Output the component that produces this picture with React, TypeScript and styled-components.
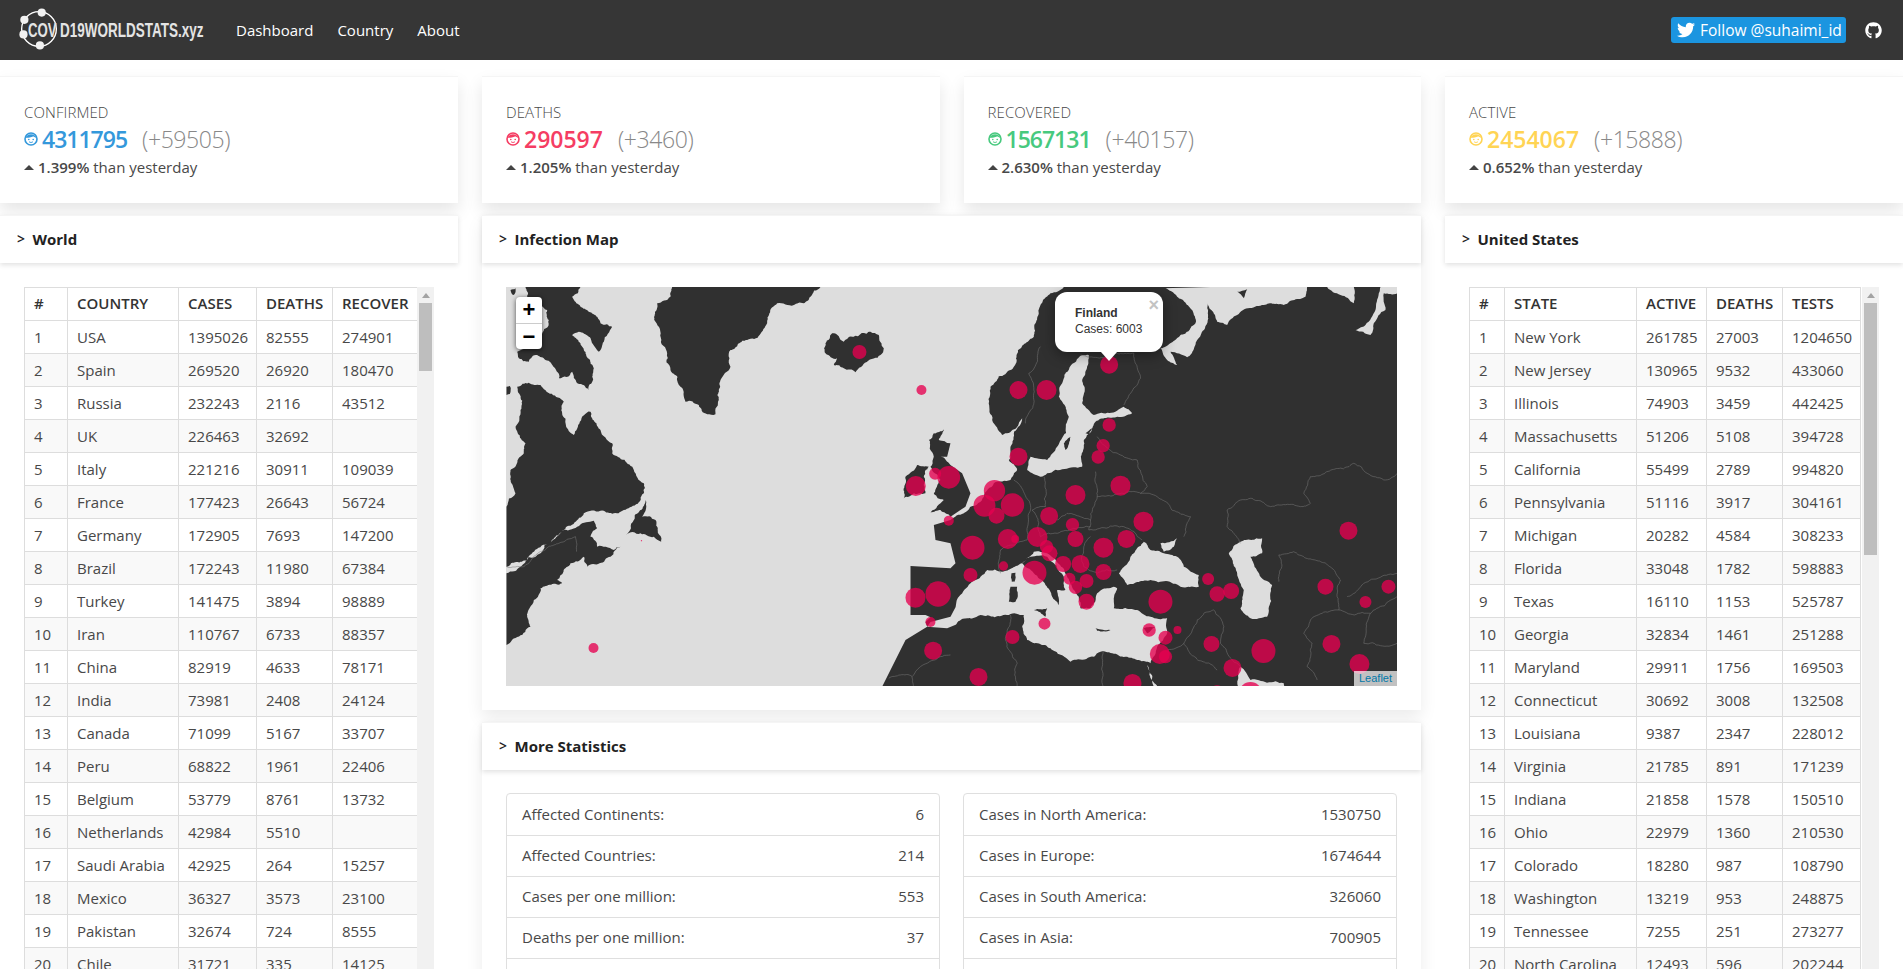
import styled, { createGlobalStyle } from "styled-components";
import { FaTwitter, FaGithub } from "react-icons/fa";

const GlobalStyle = createGlobalStyle`
  html, body {
    margin: 0;
    height: 969px;
    overflow: hidden;
    background: #fff;
    font-family: "Open Sans", "Noto Sans", sans-serif;
    font-size: 15px;
    color: #484848;
  }
  * { box-sizing: border-box; }
`;

const world = [
  ["USA", "1395026", "82555", "274901"],
  ["Spain", "269520", "26920", "180470"],
  ["Russia", "232243", "2116", "43512"],
  ["UK", "226463", "32692", ""],
  ["Italy", "221216", "30911", "109039"],
  ["France", "177423", "26643", "56724"],
  ["Germany", "172905", "7693", "147200"],
  ["Brazil", "172243", "11980", "67384"],
  ["Turkey", "141475", "3894", "98889"],
  ["Iran", "110767", "6733", "88357"],
  ["China", "82919", "4633", "78171"],
  ["India", "73981", "2408", "24124"],
  ["Canada", "71099", "5167", "33707"],
  ["Peru", "68822", "1961", "22406"],
  ["Belgium", "53779", "8761", "13732"],
  ["Netherlands", "42984", "5510", ""],
  ["Saudi Arabia", "42925", "264", "15257"],
  ["Mexico", "36327", "3573", "23100"],
  ["Pakistan", "32674", "724", "8555"],
  ["Chile", "31721", "335", "14125"],
];

const states = [
  ["New York", "261785", "27003", "1204650"],
  ["New Jersey", "130965", "9532", "433060"],
  ["Illinois", "74903", "3459", "442425"],
  ["Massachusetts", "51206", "5108", "394728"],
  ["California", "55499", "2789", "994820"],
  ["Pennsylvania", "51116", "3917", "304161"],
  ["Michigan", "20282", "4584", "308233"],
  ["Florida", "33048", "1782", "598883"],
  ["Texas", "16110", "1153", "525787"],
  ["Georgia", "32834", "1461", "251288"],
  ["Maryland", "29911", "1756", "169503"],
  ["Connecticut", "30692", "3008", "132508"],
  ["Louisiana", "9387", "2347", "228012"],
  ["Virginia", "21785", "891", "171239"],
  ["Indiana", "21858", "1578", "150510"],
  ["Ohio", "22979", "1360", "210530"],
  ["Colorado", "18280", "987", "108790"],
  ["Washington", "13219", "953", "248875"],
  ["Tennessee", "7255", "251", "273277"],
  ["North Carolina", "12493", "596", "202244"],
];

const cards = [
  { label: "CONFIRMED", total: "4311795", plus: "(+59505)", rate: "1.399%", color: "#3498db", tight: true },
  { label: "DEATHS", total: "290597", plus: "(+3460)", rate: "1.205%", color: "#f53d63", tight: false },
  { label: "RECOVERED", total: "1567131", plus: "(+40157)", rate: "2.630%", color: "#47c97e", tight: true },
  { label: "ACTIVE", total: "2454067", plus: "(+15888)", rate: "0.652%", color: "#ffd454", tight: false },
];

const leftStats = [
  ["Affected Continents:", "6"],
  ["Affected Countries:", "214"],
  ["Cases per one million:", "553"],
  ["Deaths per one million:", "37"],
  ["", ""],
];

const rightStats = [
  ["Cases in North America:", "1530750"],
  ["Cases in Europe:", "1674644"],
  ["Cases in South America:", "326060"],
  ["Cases in Asia:", "700905"],
  ["", ""],
];

// bubbles read off the reference, in 3x crop coordinates
const westBubbles = [
  [1077, 216, 21], [1263, 330, 15], [1246, 618, 30], [1304, 581, 18], [1345, 592, 34],
  [1345, 722, 15], [1245, 953, 30], [1313, 942, 38], [1290, 1026, 15], [1298, 1112, 27],
  [279, 1104, 15], [423, 782, 2],
];

const eastBubbles = [
  [204, 330, 27], [288, 330, 30], [476, 254, 27], [476, 435, 20], [458, 497, 20], [443, 531, 20],
  [204, 530, 27], [510, 617, 30], [375, 645, 30], [132, 632, 32], [102, 677, 33], [186, 675, 35],
  [138, 707, 24], [296, 708, 27], [366, 734, 20], [579, 725, 30], [261, 771, 30], [375, 777, 24],
  [459, 803, 30], [528, 777, 27], [172, 777, 30], [194, 777, 12], [66, 803, 36], [288, 800, 20],
  [297, 820, 24], [338, 852, 24], [390, 852, 27], [159, 858, 14], [60, 885, 21], [252, 878, 36],
  [459, 876, 24], [357, 896, 18], [408, 903, 21], [375, 922, 20], [408, 965, 24], [630, 965, 36],
  [773, 897, 18], [800, 942, 23], [842, 933, 24], [1125, 920, 24], [1245, 966, 18], [1314, 920, 21],
  [1194, 752, 27], [282, 1031, 18], [186, 1071, 21], [596, 1050, 20], [645, 1073, 21], [681, 1050, 12],
  [783, 1092, 24], [939, 1113, 36], [1143, 1092, 27], [628, 1122, 30], [645, 1130, 20], [846, 1164, 27],
  [1227, 1152, 30], [84, 1191, 27], [546, 1209, 27], [800, 1240, 24], [900, 1240, 34],
];

const westLand = [
  "75,21 240,21 215,50 260,90 300,130 335,140 310,185 295,215 265,170 235,155 215,165 250,210 280,265 265,330 215,275 175,295 135,240 110,225 85,245 55,235 50,215 100,190 145,120 140,90 120,70 80,50",
  "18,320 28,318 28,342 18,345",
  "30,30 45,25 40,45",
  "50,320 120,315 190,365 185,400 220,465 270,395 300,450 335,490 335,520 400,570 430,610 430,640 370,690 300,692 250,700 190,750 150,790 80,840 18,860 18,680 45,640 30,570 70,520 75,490 45,440 60,390",
  "18,880 60,860 120,820 190,750 280,722 290,745 270,770 290,800 340,810 360,800 330,830 260,860 250,830 210,850 170,900 185,910 120,925 100,960 80,1010 90,1040 18,1095",
  "375,765 400,720 435,660 425,710 465,720 482,785 460,770 420,760",
  "515,21 960,21 930,50 880,75 830,70 800,130 740,180 690,210 690,260 660,300 655,360 645,403 620,403 595,375 555,365 540,320 510,270 500,220 465,125 470,70 510,50",
  "975,190 995,160 1030,185 1060,170 1110,155 1135,165 1150,205 1140,225 1065,277 1030,265 1000,255 1010,235 975,220",
  "1285,480 1300,460 1330,448 1315,480 1350,490 1340,530 1320,530 1350,555 1385,580 1410,640 1395,680 1350,710 1320,690 1290,697 1330,660 1300,640 1320,600 1290,560 1300,530",
  "1215,590 1250,555 1285,560 1270,590 1275,640 1210,655",
];

const mainland =
  "300,40 340,21 1340,21 1340,1220 -205,1220 -135,1080 -70,1040 -75,1026 -60,1012 -75,1005 -120,1005 -120,858 0,865 15,850 0,790 -45,780 -50,735 0,720 40,700 60,680 100,650 130,610 180,600 200,570 175,540 180,500 215,415 155,465 125,420 120,320 180,270 250,170";

const seas = [
  "-60,1026 0,1010 25,950 60,910 110,870 155,875 215,850 250,815 290,820 350,890 385,950 390,985 420,985 440,940 470,925 490,920 500,925 490,960 490,985 560,990 600,1010 650,1015 650,1060 620,1100 600,1150 530,1130 450,1115 360,1145 300,1105 230,1080 215,1040 220,1005 175,1005 90,1005 -10,1045 -70,1040",
  "505,880 540,830 580,785 600,810 640,820 680,830 700,860 745,885 745,920 690,920 600,900 530,915",
  "630,790 680,775 670,800 640,815",
  "835,820 870,785 935,775 935,820 900,830 930,890 965,915 950,1010 900,1015 870,985 880,930 860,880",
  "335,310 395,225 415,225 395,300 395,370 430,405 520,380 545,400 500,410 435,425 400,480 395,560 290,580 270,590 230,570 240,530 290,540 320,500 355,410 325,350",
  "870,1160 900,1200 1000,1210 1005,1225 860,1225",
  "590,1155 625,1225 610,1225",
  "630,205 690,165 735,130 725,90 680,50 640,25 780,21 1070,21 1065,50 1000,75 940,75 860,105 830,135 800,125 770,70 770,130 740,180 710,232 660,215 680,255 650,240",
  "1130,21 1210,21 1210,70 1170,45",
  "1290,21 1340,21 1340,40 1300,40 1305,90 1270,130 1260,165 1215,150 1245,135 1275,90 1285,40",
];

const islands = [
  "240,830 290,830 340,890 345,930 320,930 325,975 305,950 285,915 250,880 215,850",
  "180,920 200,920 195,965 175,965",
  "183,880 195,878 192,905 184,905",
  "250,990 290,985 285,1010",
  "435,1045 480,1050 440,1052",
  "580,1045 615,1040 590,1060",
  "860,35 890,28 880,55",
  "340,490 360,470 345,510",
  "405,460 425,445 415,465",
];

const borders = [
  "830,690 900,655 960,680 1050,680 1080,670 1060,640 1080,590 1210,550 1250,580 1300,600 1340,580",
  "830,690 830,740 870,790",
  "270,200 235,280 250,370 225,430",
  "390,225 480,225 550,220 570,295 520,375",
  "435,575 440,650 420,720 415,750 520,740 575,780",
  "440,470 510,525 560,540 590,620 570,640 620,650 720,710 700,770",
  "440,650 570,640",
  "280,590 285,680 245,690 270,770 320,760 420,740",
  "320,720 350,700 420,720",
  "190,600 240,690 230,780 150,810 150,880",
  "420,770 400,800 400,860 440,880 500,870",
  "985,825 1030,815 1150,870 1170,900 1165,990 1080,1020 1060,1060 1085,1090 1070,1160 1100,1200",
  "985,825 985,905",
  "1165,990 1260,1000 1340,950",
  "1190,950 1240,910 1340,880",
  "790,990 760,1000 700,1090 800,1170",
  "790,990 820,1040 810,1090 870,1160",
  "700,1090 650,1110",
  "1260,1000 1240,1090 1340,1090",
  "180,1005 165,1080 200,1150 200,1220",
  "458,1115 458,1220",
];

const westBorders = [
  "18,860 70,860 120,815 175,790 225,770 228,815",
  "1165,1195 1235,1190 1260,1160 1350,1125",
  "1235,1190 1240,1220",
];

// roughen the hand-traced outlines so coasts look jagged like the real map
let seed = 7;
const rand = () => {
  seed = (seed * 16807) % 2147483647;
  return seed / 2147483647 - 0.5;
};

const onFrame = (x: number, y: number) => y <= 25 || y >= 1218 || x >= 1340 || x <= 18;

const splitEdge = (a: number[], b: number[], amp: number): number[][] => {
  const dx = b[0] - a[0];
  const dy = b[1] - a[1];
  const len = Math.hypot(dx, dy);
  if (len < 7 || (onFrame(a[0], a[1]) && onFrame(b[0], b[1]))) return [a];
  const k = rand() * amp;
  const mid = [(a[0] + b[0]) / 2 - dy * k, (a[1] + b[1]) / 2 + dx * k];
  return [...splitEdge(a, mid, amp), ...splitEdge(mid, b, amp)];
};

const rough = (points: string, amp = 0.32) => {
  const pts = points.split(" ").map((p) => p.split(",").map(Number));
  return pts
    .flatMap((p, i) => splitEdge(p, pts[(i + 1) % pts.length], amp))
    .map((p) => `${p[0].toFixed(1)},${p[1].toFixed(1)}`)
    .join(" ");
};

const roughLine = (points: string) => {
  const pts = points.split(" ").map((p) => p.split(",").map(Number));
  const out = pts.slice(0, -1).flatMap((p, i) => splitEdge(p, pts[i + 1], 0.22));
  return [...out, pts[pts.length - 1]].map((p) => p.join(",")).join(" ");
};

const westShapes = westLand.map((p) => rough(p));
const mainShape = rough(mainland, 0.26);
const seaShapes = seas.map((p) => rough(p, 0.22));
const islandShapes = islands.map((p) => rough(p, 0.2));
const borderLines = borders.map(roughLine);
const westBorderLines = westBorders.map(roughLine);

const FaceIcon = ({ color }: { color: string }) => (
  <svg width="14" height="14" viewBox="0 0 14 14">
    <circle cx="7" cy="7" r="6" fill="none" stroke={color} strokeWidth="1.6" />
    <path d="M1.5 6C3 1 11 1 12.5 6C10 4.5 9 4 7.5 5C5 6 3 5.500 1.500 6Z" fill={color} />
    <circle cx="4.800" cy="7.500" r=".8" fill={color} />
    <circle cx="9.200" cy="7.500" r=".8" fill={color} />
    <path d="M5 9.800Q7 11.300 9 9.800" fill="none" stroke={color} strokeWidth=".9" />
  </svg>
);

const LogoMark = () => (
  <LogoSvg viewBox="0 0 46 46">
    <circle cx="23" cy="23" r="19" fill="none" stroke="#fff" strokeWidth="1.5" />
    <circle cx="26" cy="5" r="4.500" fill="#f2f2f2" />
    <circle cx="7" cy="13" r="4.500" fill="#f2f2f2" />
    <circle cx="6" cy="29" r="4.500" fill="#f2f2f2" />
    <circle cx="24" cy="41" r="4.500" fill="#f2f2f2" />
  </LogoSvg>
);

const WorldMap = () => (
  <MapSvg viewBox="0 0 890 399">
    <g transform="translate(-6 -7) scale(.3333)">
      {westShapes.map((p, i) => <polygon key={i} points={p} fill="#303030" />)}
    </g>
    <g transform="translate(444 -7) scale(.3333)">
      <polygon points={mainShape} fill="#303030" />
      {seaShapes.map((p, i) => <polygon key={i} points={p} fill="#ddd" />)}
      {islandShapes.map((p, i) => <polygon key={i} points={p} fill="#303030" />)}
      {borderLines.map((p, i) => <polyline key={i} points={p} fill="none" stroke="#777" strokeWidth="1.6" />)}
      {eastBubbles.map(([x, y, r]) => (
        <circle key={`${x}-${y}`} cx={x} cy={y} r={r} fill="#e6004f" fillOpacity=".78" />
      ))}
    </g>
    <g transform="translate(-6 -7) scale(.3333)">
      {westBorderLines.map((p, i) => <polyline key={i} points={p} fill="none" stroke="#777" strokeWidth="1.6" />)}
      {westBubbles.map(([x, y, r]) => (
        <circle key={`${x}-${y}`} cx={x} cy={y} r={r} fill="#e6004f" fillOpacity=".78" />
      ))}
    </g>
  </MapSvg>
);

type TableProps = {
  head: string[];
  cols: number[];
  rows: string[][];
  thumb: number;
};

const DataTable = ({ head, cols, rows, thumb }: TableProps) => (
  <TableRow>
    <TableClip>
      <Table style={{ width: cols.reduce((a, b) => a + b, 0) }}>
        <colgroup>
          {cols.map((c, i) => <col key={i} style={{ width: c }} />)}
        </colgroup>
        <thead>
          <tr>
            <th>#</th>
            {head.map((h) => <th key={h}>{h}</th>)}
          </tr>
        </thead>
        <tbody>
          {rows.map((r, i) => (
            <tr key={r[0]}>
              <td>{i + 1}</td>
              {r.map((c, j) => <td key={j}>{c}</td>)}
            </tr>
          ))}
        </tbody>
      </Table>
    </TableClip>
    <ScrollTrack>
      <ScrollArrow />
      <ScrollThumb style={{ height: thumb }} />
    </ScrollTrack>
  </TableRow>
);

const StatList = ({ items }: { items: string[][] }) => (
  <List>
    {items.map(([k, v], i) => (
      <ListItem key={i}>
        <span>{k}</span>
        <span>{v}</span>
      </ListItem>
    ))}
  </List>
);

export default function App() {
  return (
    <>
      <GlobalStyle />
      <TopBar>
        <Logo>
          <LogoMark />
          <LogoText $width={32} $scale={0.63}>COV</LogoText>
          <LogoText $width={143} $scale={0.643}>D19WORLDSTATS.xyz</LogoText>
        </Logo>
        <NavLinks>
          <NavLink>Dashboard</NavLink>
          <NavLink>Country</NavLink>
          <NavLink>About</NavLink>
        </NavLinks>
        <NavRight>
          <FollowButton>
            <FaTwitter size={18} />
            Follow @suhaimi_id
          </FollowButton>
          <FaGithub size={17} color="#fff" />
        </NavRight>
      </TopBar>

      <Grid>
        {cards.map((c) => (
          <Card key={c.label}>
            <CardLabel>{c.label}</CardLabel>
            <CardFigures>
              <FaceIcon color={c.color} />
              <CardTotal $color={c.color} $tight={c.tight}>{c.total}</CardTotal>
              <CardPlus>{c.plus}</CardPlus>
            </CardFigures>
            <CardRate>
              <Caret />
              <b>{c.rate}</b> than yesterday
            </CardRate>
          </Card>
        ))}

        <div>
          <PanelHead><Chevron>&gt;</Chevron>World</PanelHead>
          <PanelBody>
            <DataTable
              head={["COUNTRY", "CASES", "DEATHS", "RECOVER"]}
              cols={[43, 111, 78, 76, 120]}
              rows={world}
              thumb={68}
            />
          </PanelBody>
        </div>

        <Middle>
          <Panel>
            <PanelHead><Chevron>&gt;</Chevron>Infection Map</PanelHead>
            <PanelBody>
              <MapBox>
                <WorldMap />
                <ZoomControl>
                  <ZoomButton>+</ZoomButton>
                  <ZoomButton>−</ZoomButton>
                </ZoomControl>
                <Popup>
                  <PopupClose>×</PopupClose>
                  <PopupTitle>Finland</PopupTitle>
                  <div>Cases: 6003</div>
                </Popup>
                <Attribution>Leaflet</Attribution>
              </MapBox>
            </PanelBody>
          </Panel>
          <Panel>
            <PanelHead><Chevron>&gt;</Chevron>More Statistics</PanelHead>
            <StatsBody>
              <StatList items={leftStats} />
              <StatList items={rightStats} />
            </StatsBody>
          </Panel>
        </Middle>

        <div>
          <PanelHead><Chevron>&gt;</Chevron>United States</PanelHead>
          <PanelBody>
            <DataTable
              head={["STATE", "ACTIVE", "DEATHS", "TESTS"]}
              cols={[35, 132, 70, 76, 78]}
              rows={states}
              thumb={252}
            />
          </PanelBody>
        </div>
      </Grid>
    </>
  );
}

const TopBar = styled.header`
  display: flex;
  align-items: center;
  height: 60px;
  padding: 0 21px 0 18px;
  background: #363636;
`;

const Logo = styled.div`
  display: flex;
  align-items: center;
  width: 218px;
  height: 46px;
  padding-left: 10px;
  position: relative;
`;

const LogoSvg = styled.svg`
  position: absolute;
  left: 0;
  top: 1px;
  width: 42px;
  height: 42px;
`;

const LogoText = styled.span<{ $width: number; $scale: number }>`
  display: inline-block;
  flex: none;
  width: ${(p) => p.$width}px;
  font-family: "Liberation Sans", sans-serif;
  font-weight: 700;
  font-size: 21px;
  color: #e4e4e4;
  white-space: nowrap;
  transform: scaleX(${(p) => p.$scale});
  transform-origin: left center;
`;

const NavLinks = styled.nav`
  display: flex;
  gap: 24px;
`;

const NavLink = styled.a`
  color: #fff;
  font-size: 15px;
`;

const NavRight = styled.div`
  display: flex;
  align-items: center;
  gap: 19px;
  margin-left: auto;
`;

const FollowButton = styled.a`
  display: flex;
  align-items: center;
  gap: 5px;
  height: 26px;
  width: 175px;
  padding-left: 6px;
  border-radius: 3px;
  background: #1b95e0;
  color: #fff;
  font-size: 15.500px;
  white-space: nowrap;
`;

const Grid = styled.main`
  display: grid;
  grid-template-columns: repeat(4, 1fr);
  grid-template-rows: 127px auto;
  column-gap: 24px;
  row-gap: 12px;
  margin-top: 16px;
`;

const Card = styled.section`
  padding: 25px 24px 0;
  background: #fff;
  border-top: 1px solid #f5f5f5;
  box-shadow: 0 8px 16px rgba(0, 0, 0, 0.1);
`;

const CardLabel = styled.div`
  font-weight: 300;
  font-size: 15px;
  line-height: 20px;
  letter-spacing: 0.1px;
`;

const CardFigures = styled.div`
  display: flex;
  align-items: center;
  gap: 4px;
  height: 34px;
`;

const CardTotal = styled.span<{ $color: string; $tight: boolean }>`
  color: ${(p) => p.$color};
  font-size: 23px;
  font-weight: 600;
  letter-spacing: ${(p) => (p.$tight ? "-1px" : "0")};
`;

const CardPlus = styled.span`
  margin-left: 11px;
  color: #888;
  font-size: 23px;
  font-weight: 300;
  letter-spacing: -0.4px;
`;

const CardRate = styled.div`
  display: flex;
  align-items: center;
  height: 22px;
  font-size: 15px;
  white-space: pre;
  b { font-weight: 600; }
`;

const Caret = styled.i`
  width: 0;
  height: 0;
  margin-right: 4px;
  border: 5px solid transparent;
  border-top: 0;
  border-bottom-color: #444;
`;

const Panel = styled.section`
  background: #fff;
  box-shadow: 0 8px 16px rgba(0, 0, 0, 0.08);
`;

const PanelHead = styled.h2`
  display: flex;
  align-items: center;
  height: 48px;
  margin: 0;
  padding: 0 0 2px 17px;
  background: #fff;
  color: #222;
  font-size: 15px;
  font-weight: 700;
  border-top: 1px solid #f5f5f5;
  box-shadow: 0 2px 5px rgba(0, 0, 0, 0.12);
`;

const Chevron = styled.span`
  width: 15.500px;
  font-size: 14px;
  font-weight: 600;
`;

const PanelBody = styled.div`
  padding: 24px;
`;

const Middle = styled.div`
  grid-column: span 2;
  display: flex;
  flex-direction: column;
  gap: 12px;
`;

const MapBox = styled.div`
  position: relative;
  height: 399px;
  overflow: hidden;
  background: #ddd;
  font-family: "Liberation Sans", Arial, sans-serif;
`;

const MapSvg = styled.svg`
  display: block;
  width: 100%;
  height: 100%;
`;

const ZoomControl = styled.div`
  position: absolute;
  left: 10px;
  top: 10px;
  width: 26px;
  border-radius: 4px;
  background: #fff;
  box-shadow: 0 1px 5px rgba(0, 0, 0, 0.65);
`;

const ZoomButton = styled.div`
  height: 26px;
  color: #000;
  font-size: 22px;
  font-weight: 700;
  line-height: 26px;
  text-align: center;
  & + & { border-top: 1px solid #ccc; }
`;

const Popup = styled.div`
  position: absolute;
  left: 549px;
  top: 5px;
  width: 108px;
  height: 60px;
  padding: 13px 0 0 20px;
  border-radius: 12px;
  background: #fff;
  box-shadow: 0 3px 14px rgba(0, 0, 0, 0.4);
  color: #333;
  font-size: 12px;
  line-height: 16px;
  &::after {
    content: "";
    position: absolute;
    left: 46px;
    bottom: -9px;
    border: 8px solid transparent;
    border-bottom: 0;
    border-top: 9px solid #fff;
  }
`;

const PopupClose = styled.span`
  position: absolute;
  right: 4px;
  top: 4px;
  color: #c3c3c3;
  font-size: 18px;
  font-weight: 700;
  line-height: 18px;
`;

const PopupTitle = styled.div`
  font-weight: 700;
`;

const Attribution = styled.div`
  position: absolute;
  right: 0;
  bottom: 0;
  padding: 0 5px;
  background: rgba(255, 255, 255, 0.7);
  color: #0078a8;
  font-size: 11px;
  line-height: 15px;
`;

const StatsBody = styled.div`
  display: grid;
  grid-template-columns: 1fr 1fr;
  gap: 23px;
  padding: 23px 24px 24px;
`;

const List = styled.div`
  border: 1px solid #dfdfdf;
  border-radius: 4px;
`;

const ListItem = styled.div`
  display: flex;
  justify-content: space-between;
  align-items: center;
  height: 41px;
  padding: 0 15px 2px;
  & + & { border-top: 1px solid #dfdfdf; }
`;

const TableRow = styled.div`
  display: flex;
`;

const TableClip = styled.div`
  width: 393px;
  overflow: hidden;
`;

const Table = styled.table`
  table-layout: fixed;
  border-collapse: collapse;
  th, td {
    height: 33px;
    padding: 0 9px 1px;
    border: 1px solid #ddd;
    text-align: left;
    white-space: nowrap;
    overflow: hidden;
  }
  th {
    color: #333;
    font-weight: 600;
    padding-bottom: 3px;
  }
  tbody tr:nth-child(even) td {
    background: #f9f9f9;
  }
`;

const ScrollTrack = styled.div`
  flex: none;
  width: 17px;
  background: #f1f1f1;
`;

const ScrollArrow = styled.div`
  width: 0;
  height: 0;
  margin: 6px auto 5px;
  border: 4px solid transparent;
  border-top: 0;
  border-bottom: 5px solid #a3a3a3;
`;

const ScrollThumb = styled.div`
  width: 13px;
  margin: 0 auto;
  background: #bebebe;
`;
